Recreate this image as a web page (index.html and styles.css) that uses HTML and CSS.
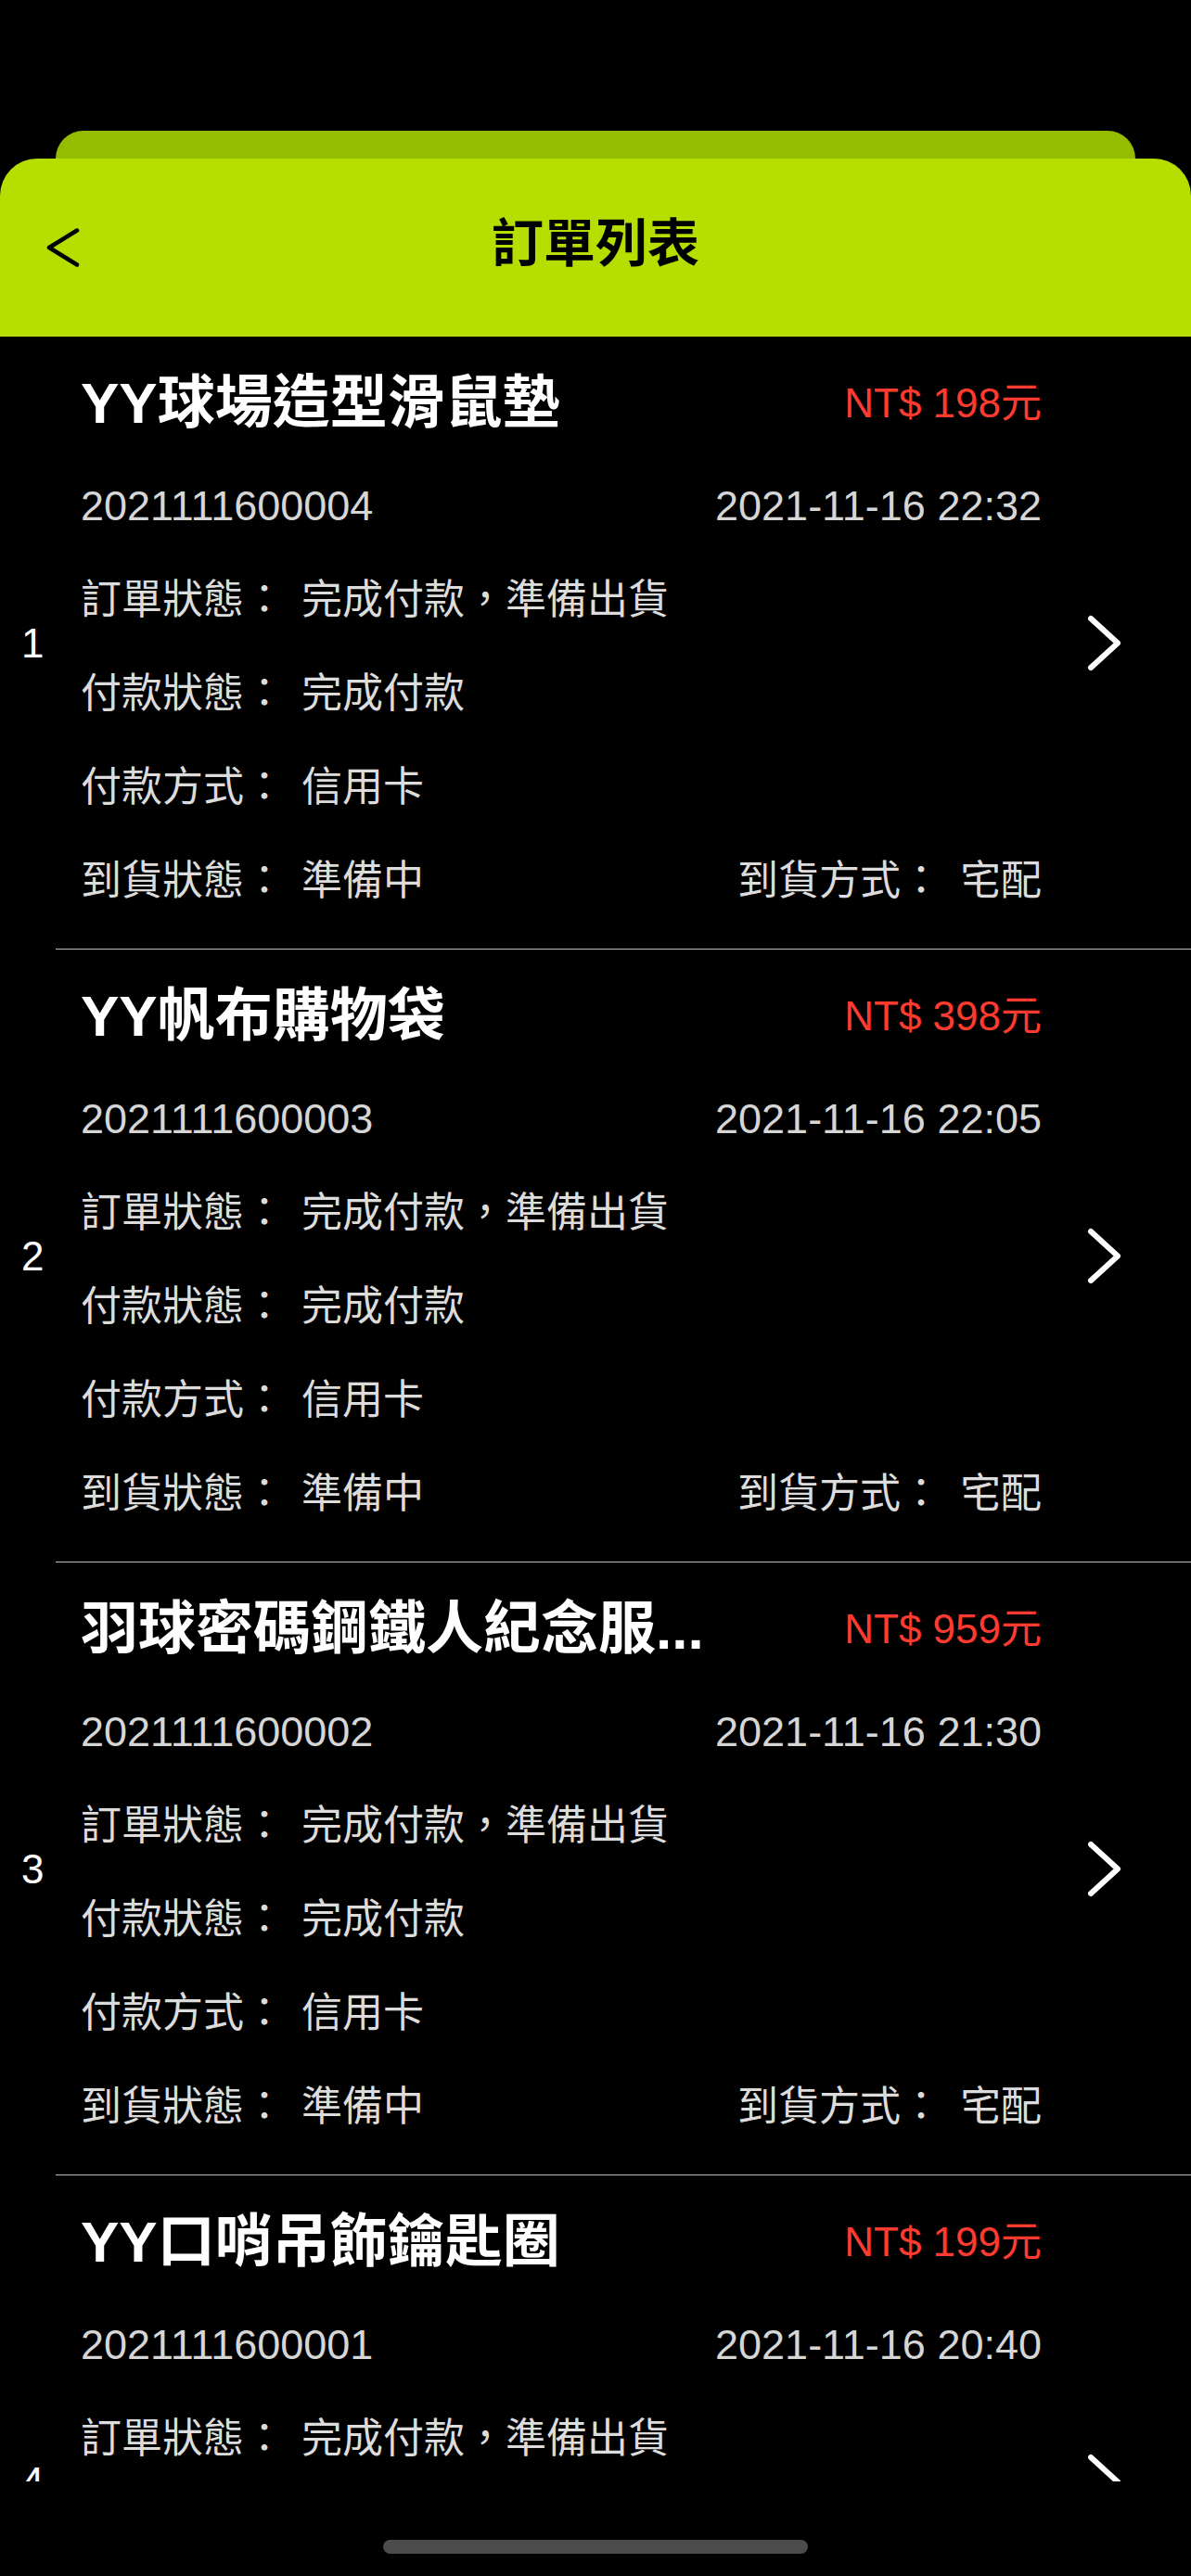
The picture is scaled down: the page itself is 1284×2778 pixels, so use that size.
FILE: index.html
```html
<!DOCTYPE html>
<html lang="zh-Hant">
<head>
<meta charset="utf-8">
<title>訂單列表</title>
<link rel="stylesheet" href="styles.css">
</head>
<body>
<div class="screen">
  <div class="statusbar"></div>
  <header class="nav">
    <div class="nav-back-layer"></div>
    <div class="nav-bar">
      <button class="back" aria-label="返回">
        <svg width="40" height="49" viewBox="0 0 40 49"><polyline points="34,9.5 4,28 34,46.5" fill="none" stroke="#000" stroke-width="4.5" stroke-linecap="round" stroke-linejoin="round"/></svg>
      </button>
      <h1 class="nav-title">訂單列表</h1>
      <div></div>
    </div>
  </header>

  <main class="list">
    <div class="order">
      <div class="order-idx">1</div>
      <div class="order-body">
        <div class="order-info">
          <div class="row row-title"><span class="title">YY球場造型滑鼠墊</span><span class="price">NT$ 198元</span></div>
          <div class="row"><span class="meta">2021111600004</span><span class="meta">2021-11-16 22:32</span></div>
          <div class="row"><span class="field"><span class="label">訂單狀態：</span><span class="value">完成付款，準備出貨</span></span></div>
          <div class="row"><span class="field"><span class="label">付款狀態：</span><span class="value">完成付款</span></span></div>
          <div class="row"><span class="field"><span class="label">付款方式：</span><span class="value">信用卡</span></span></div>
          <div class="row"><span class="field"><span class="label">到貨狀態：</span><span class="value">準備中</span></span><span class="field"><span class="label label-r">到貨方式：</span><span class="value">宅配</span></span></div>
        </div>
        <div class="order-go"><svg width="41" height="65" viewBox="0 0 41 65"><polyline points="6,6 35,32.5 6,59" fill="none" stroke="#fff" stroke-width="6" stroke-linecap="round" stroke-linejoin="round"/></svg></div>
      </div>
    </div>

    <div class="order">
      <div class="order-idx">2</div>
      <div class="order-body">
        <div class="order-info">
          <div class="row row-title"><span class="title">YY帆布購物袋</span><span class="price">NT$ 398元</span></div>
          <div class="row"><span class="meta">2021111600003</span><span class="meta">2021-11-16 22:05</span></div>
          <div class="row"><span class="field"><span class="label">訂單狀態：</span><span class="value">完成付款，準備出貨</span></span></div>
          <div class="row"><span class="field"><span class="label">付款狀態：</span><span class="value">完成付款</span></span></div>
          <div class="row"><span class="field"><span class="label">付款方式：</span><span class="value">信用卡</span></span></div>
          <div class="row"><span class="field"><span class="label">到貨狀態：</span><span class="value">準備中</span></span><span class="field"><span class="label label-r">到貨方式：</span><span class="value">宅配</span></span></div>
        </div>
        <div class="order-go"><svg width="41" height="65" viewBox="0 0 41 65"><polyline points="6,6 35,32.5 6,59" fill="none" stroke="#fff" stroke-width="6" stroke-linecap="round" stroke-linejoin="round"/></svg></div>
      </div>
    </div>

    <div class="order">
      <div class="order-idx">3</div>
      <div class="order-body">
        <div class="order-info">
          <div class="row row-title"><span class="title">羽球密碼鋼鐵人紀念服...</span><span class="price">NT$ 959元</span></div>
          <div class="row"><span class="meta">2021111600002</span><span class="meta">2021-11-16 21:30</span></div>
          <div class="row"><span class="field"><span class="label">訂單狀態：</span><span class="value">完成付款，準備出貨</span></span></div>
          <div class="row"><span class="field"><span class="label">付款狀態：</span><span class="value">完成付款</span></span></div>
          <div class="row"><span class="field"><span class="label">付款方式：</span><span class="value">信用卡</span></span></div>
          <div class="row"><span class="field"><span class="label">到貨狀態：</span><span class="value">準備中</span></span><span class="field"><span class="label label-r">到貨方式：</span><span class="value">宅配</span></span></div>
        </div>
        <div class="order-go"><svg width="41" height="65" viewBox="0 0 41 65"><polyline points="6,6 35,32.5 6,59" fill="none" stroke="#fff" stroke-width="6" stroke-linecap="round" stroke-linejoin="round"/></svg></div>
      </div>
    </div>

    <div class="order">
      <div class="order-idx">4</div>
      <div class="order-body">
        <div class="order-info">
          <div class="row row-title"><span class="title">YY口哨吊飾鑰匙圈</span><span class="price">NT$ 199元</span></div>
          <div class="row"><span class="meta">2021111600001</span><span class="meta">2021-11-16 20:40</span></div>
          <div class="row"><span class="field"><span class="label">訂單狀態：</span><span class="value">完成付款，準備出貨</span></span></div>
          <div class="row"><span class="field"><span class="label">付款狀態：</span><span class="value">完成付款</span></span></div>
          <div class="row"><span class="field"><span class="label">付款方式：</span><span class="value">信用卡</span></span></div>
          <div class="row"><span class="field"><span class="label">到貨狀態：</span><span class="value">準備中</span></span><span class="field"><span class="label label-r">到貨方式：</span><span class="value">宅配</span></span></div>
        </div>
        <div class="order-go"><svg width="41" height="65" viewBox="0 0 41 65"><polyline points="6,6 35,32.5 6,59" fill="none" stroke="#fff" stroke-width="6" stroke-linecap="round" stroke-linejoin="round"/></svg></div>
      </div>
    </div>
  </main>

  <div class="home-indicator"></div>
</div>
</body>
</html>
```

FILE: styles.css
```css
html, body {
  margin: 0;
  padding: 0;
  background: #000;
}

body {
  font-family: "Liberation Sans", "Noto Sans CJK TC", sans-serif;
  color: #fff;
}

.screen {
  height: 2778px;
  overflow: hidden;
  display: flex;
  flex-direction: column;
}

.statusbar {
  height: 141px;
  flex: none;
}

.nav {
  flex: none;
}

.nav-back-layer {
  height: 30px;
  margin: 0 60px;
  background: #95bd00;
  border-radius: 30px 30px 0 0;
}

.nav-bar {
  height: 192px;
  box-sizing: border-box;
  padding-bottom: 8px;
  background: #b6de00;
  border-radius: 40px 40px 0 0;
  display: grid;
  grid-template-columns: 1fr auto 1fr;
  align-items: center;
}

.back {
  justify-self: start;
  margin-left: 49px;
  padding: 0;
  border: 0;
  background: none;
  display: flex;
}

.nav-title {
  margin: 0;
  font-size: 56px;
  font-weight: 700;
  line-height: 1;
  color: #000;
}

.list {
  flex: none;
  height: 2313px;
  overflow: hidden;
}

.order {
  display: flex;
}

.order-idx {
  flex: 0 0 60px;
  box-sizing: border-box;
  padding-left: 23px;
  display: flex;
  align-items: center;
  font-size: 44px;
  line-height: 1;
  color: #fff;
}

.order-body {
  flex: 1;
  display: flex;
  align-items: center;
  border-bottom: 1px solid #bdbdbd;
}

.order-info {
  flex: 0 0 1063px;
  box-sizing: border-box;
  padding: 8px 0 23px 27px;
}

.row {
  height: 101px;
  display: flex;
  justify-content: space-between;
  align-items: center;
  font-size: 44px;
  line-height: 1;
  color: #dcdcdc;
}

.row-title {
  height: 124px;
}

.title {
  font-size: 62px;
  font-weight: 700;
  color: #fff;
  white-space: nowrap;
  padding-top: 3px;
}

.price {
  font-size: 44px;
  color: #ff3b30;
  white-space: nowrap;
  padding-top: 3px;
}

.meta {
  font-size: 45px;
  color: #d6d6d6;
  white-space: nowrap;
}

.field {
  display: flex;
  white-space: nowrap;
}

.label {
  width: 238px;
  flex: none;
}

.label-r {
  width: 240px;
}

.order-go {
  margin-left: 47px;
  display: flex;
}

.home-indicator {
  flex: none;
  width: 458px;
  height: 15px;
  border-radius: 8px;
  background: #4c4c4c;
  margin: 63px auto 0;
}
```
